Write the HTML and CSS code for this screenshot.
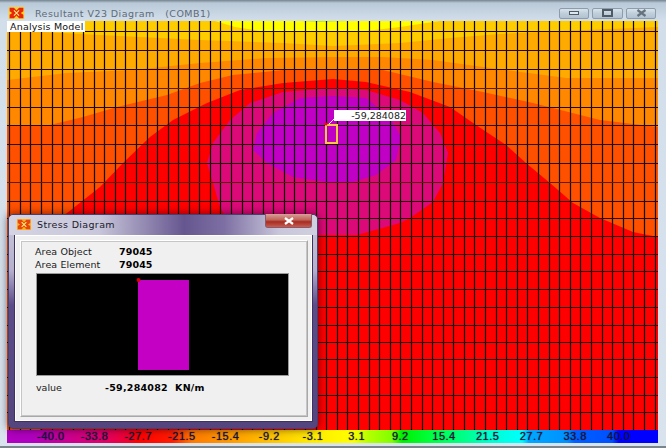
FILE: index.html
```html
<!DOCTYPE html>
<html lang="en">
<head>
<meta charset="utf-8">
<title>Resultant V23 Diagram</title>
<link rel="stylesheet" href="styles.css">
</head>
<body>
<div class="window">
  <header class="titlebar">
    <svg class="app-icon" width="17" height="12" viewBox="0 0 18 14">
      <rect width="18" height="14" fill="#ffd21a"/>
      <path d="M1 1h5l3 3 3-3h5v4l-3 2 3 2v4h-5l-3-3-3 3H1V9l3-2-3-2z" fill="#e8260c"/>
      <path d="M6 4l6 6M12 4l-6 6" stroke="#ffe97a" stroke-width="1.4"/>
    </svg>
    <span class="title">Resultant V23 Diagram&nbsp;&nbsp; (COMB1)</span>
    <div class="controls">
      <div class="ctl ctl-min"><svg width="10" height="5" viewBox="0 0 10 5"><rect x=".5" y=".5" width="9" height="3" fill="#dfe6ec" stroke="#4e5a66"/></svg></div>
      <div class="ctl ctl-max"><svg width="11" height="8" viewBox="0 0 11 8"><rect x="1" y="1" width="9" height="6" fill="none" stroke="#4e5a66" stroke-width="2"/></svg></div>
      <div class="ctl ctl-close"><svg width="11" height="8" viewBox="0 0 11 8"><path d="M1.500 1l8 6M9.500 1l-8 6" stroke="#66727e" stroke-width="2.200"/></svg></div>
    </div>
  </header>

  <main class="canvas">
    <svg class="plot" width="651" height="409" viewBox="7 21 651 409">
      <rect x="7" y="21" width="651" height="409" fill="#ffcc00"/>
      <polygon fill="#ffff00" points="215,21 235,27 260,31 333,32 366,31 400,27 433,22 440,21"/>
      <polygon fill="#b8f000" points="300,21 320,22 350,21"/>
      <polygon fill="#ffaa00" points="7,30 100,35 200,40 283,43 333,46 400,43 450,38 500,34 560,31 658,27 658,430 7,430"/>
      <polygon fill="#ff8800" points="7,80 67,73 133,70 200,63 267,58 333,57 383,57 433,60 483,67 566,78 658,78 658,430 7,430"/>
      <polygon fill="#ff5000" points="7,126 50,125 83,117 117,107 167,95 200,83 233,75 283,70 333,69 383,70 433,82 483,92 533,103 600,120 658,127 658,430 7,430"/>
      <polygon fill="#ff0000" points="40,230 67,213 100,187 123,163 150,137 173,120 207,103 240,90 283,83 333,79 366,82 410,92 450,107 476,125 506,145 526,163 550,183 573,203 600,218 633,232 658,237 658,430 40,430"/>
      <polygon fill="#dc0a78" points="240,235 225,216 220,207 213,183 207,163 213,143 230,120 250,103 283,92 333,88 366,90 400,100 423,113 440,133 448,153 443,183 433,202 410,218 400,223 357,235"/>
      <polygon fill="#c000c4" points="333,96 300,98 273,113 257,133 253,150 267,163 293,177 333,183 353,182 376,175 396,160 401,137 390,117 366,98"/>
      <path class="grid-v" d="M9.500 21V430M20.500 21V430M30.500 21V430M41.500 21V430M52.500 21V430M62.500 21V430M73.500 21V430M83.500 21V430M94.500 21V430M104.500 21V430M115.500 21V430M125.500 21V430M136.500 21V430M147.500 21V430M157.500 21V430M168.500 21V430M178.500 21V430M189.500 21V430M199.500 21V430M210.500 21V430M220.500 21V430M231.500 21V430M242.500 21V430M252.500 21V430M263.500 21V430M273.500 21V430M284.500 21V430M294.500 21V430M305.500 21V430M316.500 21V430M326.500 21V430M337.500 21V430M347.500 21V430M358.500 21V430M369.500 21V430M379.500 21V430M390.500 21V430M400.500 21V430M411.500 21V430M422.500 21V430M432.500 21V430M443.500 21V430M453.500 21V430M464.500 21V430M474.500 21V430M485.500 21V430M496.500 21V430M506.500 21V430M517.500 21V430M527.500 21V430M538.500 21V430M549.500 21V430M559.500 21V430M570.500 21V430M580.500 21V430M591.500 21V430M602.500 21V430M612.500 21V430M623.500 21V430M633.500 21V430M644.500 21V430M655.500 21V430"/>
      <path class="grid-h" d="M7 31.500H658M7 50.500H658M7 69.500H658M7 107.500H658M7 125.500H658M7 144.500H658M7 163.500H658M7 201.500H658M7 218.500H658M7 236.500H658M7 254.500H658M7 271.500H658M7 289.500H658M7 307.500H658M7 325.500H658M7 342.500H658M7 359.500H658M7 377.500H658M7 395.500H658M7 412.500H658"/>
      <path class="grid-h-soft" d="M7 88.500H658M7 182.500H658"/>
      <rect class="marker" x="326" y="125" width="11" height="18"/>
      <path class="marker-lead" d="M329 124L335 118"/>
      <circle cx="326" cy="124" r="1.500" fill="#ff0000"/>
    </svg>
    <div class="model-label">Analysis Model</div>
    <div class="readout">-59,284082</div>
  </main>

  <footer class="legend">
    <span>-40.0</span><span>-33.8</span><span>-27.7</span><span>-21.5</span><span>-15.4</span><span>-9.2</span><span>-3.1</span>
    <span>3.1</span><span>9.2</span><span>15.4</span><span>21.5</span><span>27.7</span><span>33.8</span><span>40.0</span>
  </footer>

  <section class="dialog">
    <div class="dialog-title">
      <svg class="app-icon" width="14" height="11" viewBox="0 0 18 14">
        <rect width="18" height="14" fill="#ffb21a"/>
        <path d="M1 1h5l3 3 3-3h5v4l-3 2 3 2v4h-5l-3-3-3 3H1V9l3-2-3-2z" fill="#e8460c"/>
        <path d="M6 4l6 6M12 4l-6 6" stroke="#ffe97a" stroke-width="1.600"/>
      </svg>
      <span>Stress Diagram</span>
      <div class="dialog-close"><svg width="12" height="8" viewBox="0 0 12 8"><path d="M2 1l8 6M10 1l-8 6" stroke="#fff" stroke-width="2.200"/></svg></div>
    </div>
    <div class="dialog-client">
      <div class="groove">
        <dl class="info">
          <dt>Area Object</dt><dd>79045</dd>
          <dt>Area Element</dt><dd>79045</dd>
        </dl>
        <div class="stress-plot">
          <svg width="251" height="101" viewBox="0 0 251 101">
            <rect x="101" y="6" width="51" height="90" fill="#c400c4"/>
            <circle cx="101.500" cy="6" r="2" fill="#e00000"/>
          </svg>
        </div>
        <div class="value-row"><span class="value-label">value</span><strong class="value-num">-59,284082&nbsp;&nbsp;KN/m</strong></div>
      </div>
    </div>
  </section>
</div>
</body>
</html>
```
FILE: styles.css
```css
* { box-sizing: border-box; }
html, body { margin: 0; padding: 0; }
body { width: 666px; height: 448px; overflow: hidden; font-family: "DejaVu Sans", sans-serif; }

.window {
  position: relative;
  width: 666px;
  height: 448px;
  display: flex;
  flex-direction: column;
  padding-left: 7px;
  background: linear-gradient(#75838e 0, #b9c9d8 3px, #d2deea 20px, #d8e3ee 100%);
  border-bottom: 2px solid #7b838b;
}

.titlebar {
  height: 21px;
  flex: none;
  display: flex;
  align-items: center;
  margin-left: -7px;
  padding: 5px 10px 0 8px;
}
.title { margin-left: 10px; font-size: 9.500px; letter-spacing: .45px; color: #5d6b78; white-space: nowrap; }
.controls { margin-left: auto; display: flex; gap: 3px; }
.ctl {
  height: 11px;
  width: 30px;
  display: flex;
  align-items: center;
  justify-content: center;
  border: 1px solid #8d9cab;
  border-radius: 2px;
  background: linear-gradient(#d9e3ec, #c0cedb 50%, #b3c2d0);
}
.ctl-max { width: 31px; }

.canvas { position: relative; width: 651px; height: 409px; flex: none; }
.plot { display: block; }
.grid-v { stroke: #0c0404; stroke-width: 1.200; fill: none; }
.grid-h { stroke: #200a0a; stroke-width: 1; fill: none; }
.grid-h-soft { stroke: #5a2008; stroke-width: 1; fill: none; }
.marker { fill: none; stroke: #ffc840; stroke-width: 2; }
.marker-lead { stroke: #fff; stroke-width: 1; }

.model-label {
  position: absolute;
  left: 0;
  top: 0;
  width: 78px;
  height: 11px;
  padding-left: 3px;
  background: #fff;
  font-size: 9.500px;
  line-height: 11px;
  letter-spacing: .2px;
  color: #111;
  white-space: nowrap;
}
.readout {
  position: absolute;
  left: 327px;
  top: 89px;
  width: 72px;
  height: 11px;
  background: #fff;
  font-size: 9.500px;
  line-height: 11px;
  text-align: right;
  color: #222;
}

.legend {
  flex: none;
  width: 651px;
  height: 13px;
  display: grid;
  grid-template-columns: repeat(14, 43.700px);
  padding-left: 22px;
  background: linear-gradient(90deg,
    #b000c0 0, #b000c0 25px, #c4009c 50px, #e0006a 95px, #f00030 120px, #ff0000 130px, #ff1c00 165px,
    #ff7a00 185px, #ff9c00 225px, #ffc000 260px, #ffe800 300px, #ffff00 345px,
    #b4ff00 362px, #80ff00 385px, #00f000 395px, #00ff40 425px, #00ff90 460px, #00ffc8 480px, #00ffff 515px,
    #00a8ff 522px, #0090ff 560px, #0060ff 568px, #0050ff 605px, #0000ff 612px, #0000ff 100%);
}
.legend span {
  text-align: center;
  font-family: "Liberation Sans", sans-serif;
  font-size: 11px;
  line-height: 13px;
  letter-spacing: .5px;
  color: #14143a;
  text-shadow: 0 0 1px rgba(10, 10, 50, .8);
}

.dialog {
  position: absolute;
  left: 8px;
  top: 214px;
  width: 310px;
  height: 215px;
  display: flex;
  flex-direction: column;
  padding: 0 5px 7px 6px;
  border: 1px solid #4a3f6a;
  border-radius: 5px;
  background: linear-gradient(#c9c9da 0, #b6b0cc 55px, #8f85b0 70px, #5c4c88 90px, #54457f 100%);
  box-shadow: 0 0 8px rgba(30, 0, 20, .65);
}
.dialog-title {
  height: 20px;
  flex: none;
  position: relative;
  display: flex;
  align-items: center;
  margin: 0 -5px 0 -6px;
  padding: 0 7px 1px 8px;
  border-radius: 5px 5px 0 0;
  background: linear-gradient(90deg, #d4d4e2 0, #c8c6da 90px, #66568f 175px, #7d6fa3 215px, #c8c6da 270px, #d0d0e0 100%);
  font-size: 9.500px;
  letter-spacing: .35px;
  color: #20202c;
}
.dialog-title span { margin-left: 6px; }
.dialog-close {
  position: absolute;
  right: 5px;
  top: -1px;
  width: 47px;
  height: 14px;
  display: flex;
  align-items: center;
  justify-content: center;
  border: 1px solid #8a5a6a;
  border-top: 0;
  border-radius: 0 0 3px 3px;
  background: linear-gradient(#d8a098 0, #c06458 45%, #a82c20 60%, #c45e52 100%);
}
.dialog-client {
  flex: 1;
  padding: 4px 3px 3px 4px;
  background: #f0f0f0;
  border: 1px solid #fff;
  box-shadow: 0 0 0 1px #3e3360;
}
.groove {
  height: 100%;
  padding: 4px 0 0 15px;
  border: 1px solid #fff;
  border-right-color: #a8a8a8;
  border-bottom-color: #a8a8a8;
  outline: 1px solid #c6c6c6;
  outline-offset: -2px;
}
.info {
  margin: 0 0 0 -1px;
  display: grid;
  grid-template-columns: 84px auto;
  grid-auto-rows: 13px;
  font-size: 9.500px;
  line-height: 13px;
  letter-spacing: .1px;
  color: #1a1a1a;
}
.info dd { margin: 0; font-weight: bold; color: #000; }
.stress-plot {
  width: 253px;
  height: 103px;
  margin-top: 2px;
  background: #000;
  border: 1px solid #9a9a9a;
}
.stress-plot svg { display: block; }
.value-row {
  display: flex;
  margin-top: 6px;
  font-size: 9.500px;
  line-height: 12px;
  color: #1a1a1a;
}
.value-label { width: 69px; }
.value-num { color: #000; letter-spacing: .25px; }
```
